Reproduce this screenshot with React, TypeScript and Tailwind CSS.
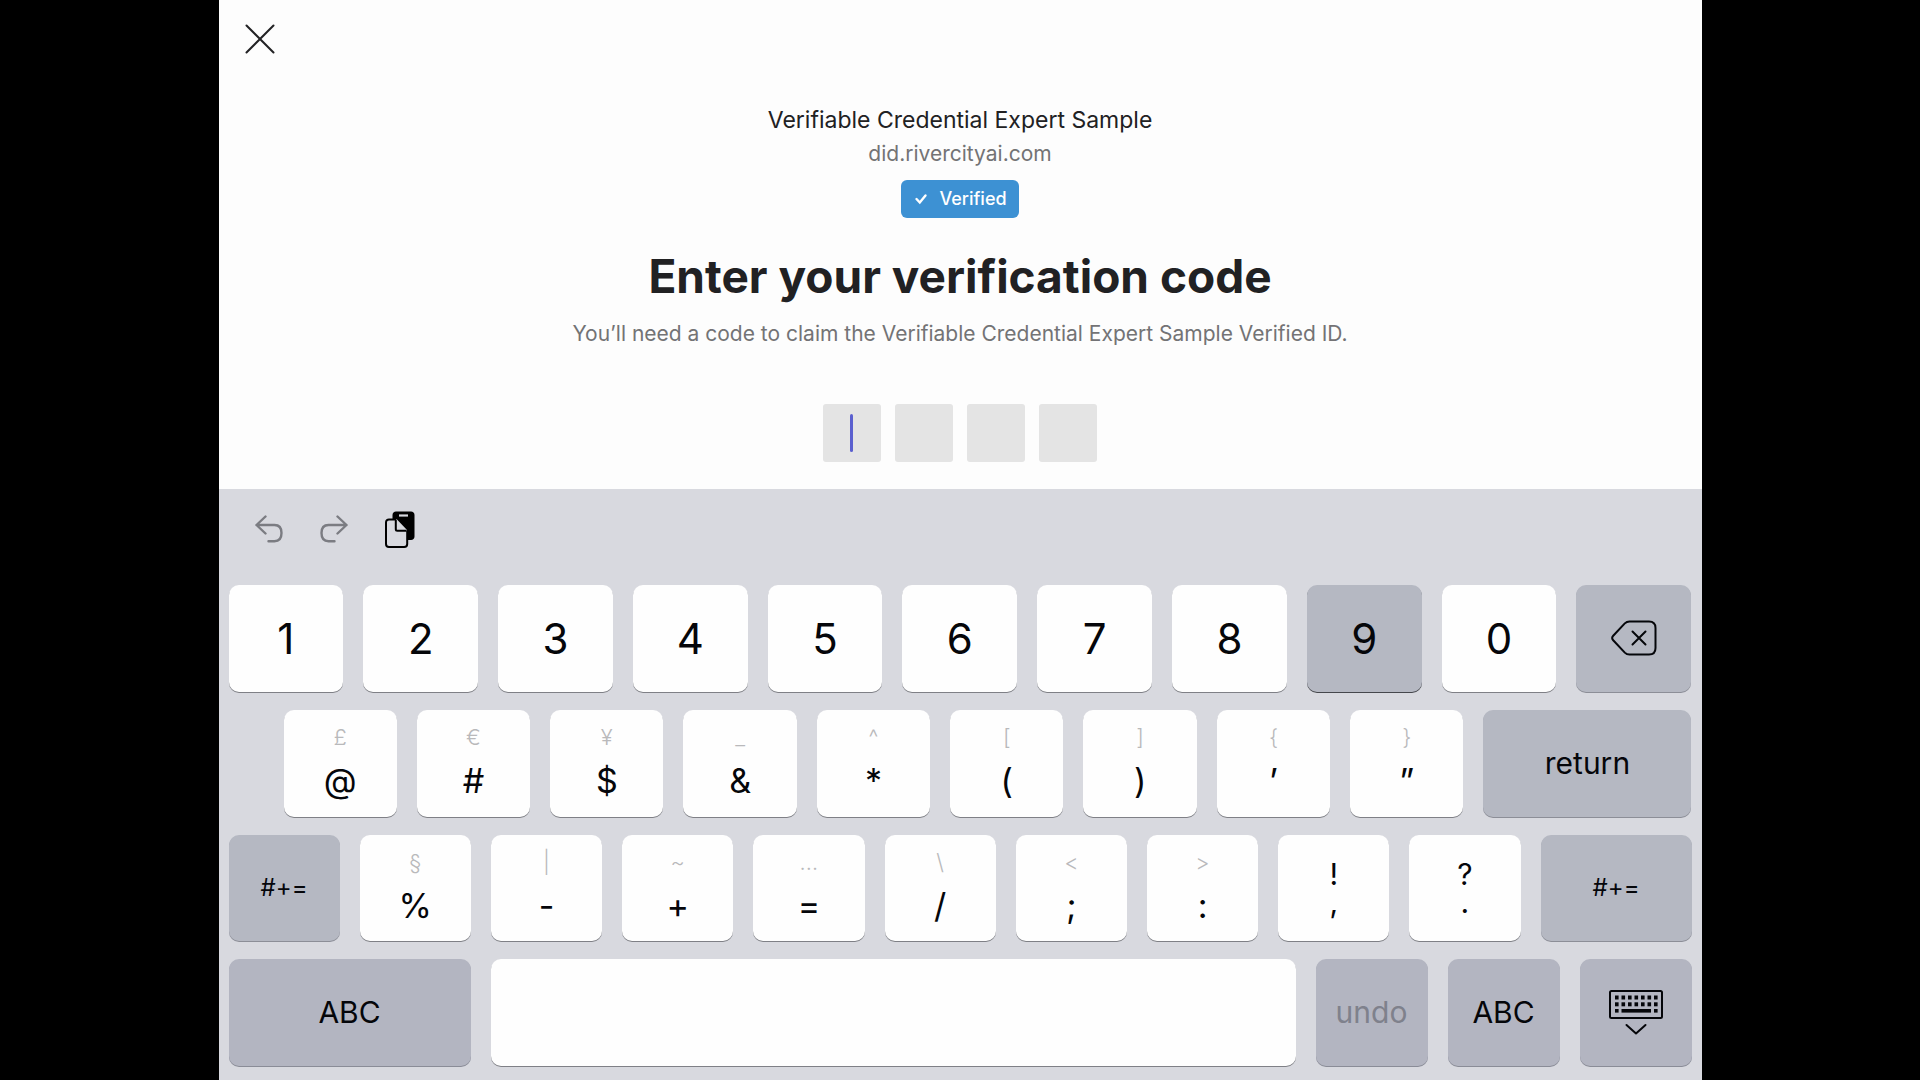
import type { ReactNode } from "react";

const WHITE = "bg-[#fefefe] shadow-[0_1px_0_#7f8086]";
const GREY = "bg-[#b5b8c2] shadow-[0_1px_0_#8c8e97]";
const DIM = "bg-[#b3b5c1] shadow-[0_1px_0_#8a8c97]";
const PRESSED = "bg-[#b5b8c2] shadow-[0_1px_0_#45474c]";

function Key({
  tone = WHITE,
  size = "min-w-0 flex-1",
  label,
  children,
}: {
  tone?: string;
  size?: string;
  label?: string;
  children?: ReactNode;
}) {
  return (
    <button
      type="button"
      aria-label={label}
      className={`mb-px flex flex-col items-center justify-center rounded-[10px] ${size} ${tone}`}
    >
      {children}
    </button>
  );
}

function DualKey({ alt, main }: { alt: string; main: string }) {
  return (
    <Key>
      <span className="text-[22px] leading-10 font-light text-[#b9b9bb]">{alt}</span>
      <span className="pb-1 text-[34px] leading-12">{main}</span>
    </Key>
  );
}

function PunctuationKey({ top, bottom }: { top: string; bottom: string }) {
  return (
    <Key>
      <span className="text-[30px] leading-7">{top}</span>
      <span className="text-[30px] leading-7">{bottom}</span>
    </Key>
  );
}

function CloseIcon() {
  return (
    <svg width="30" height="30" viewBox="0 0 30 30" fill="none" stroke="#222224" strokeWidth="2" strokeLinecap="round">
      <path d="M1.5 1.5 28.5 28.5M28.5 1.5 1.5 28.5" />
    </svg>
  );
}

function UndoIcon({ flipped = false }: { flipped?: boolean }) {
  return (
    <svg
      width="28"
      height="28"
      viewBox="0 0 28 28"
      fill="none"
      stroke="#7b7c82"
      strokeWidth="2.4"
      strokeLinecap="round"
      strokeLinejoin="round"
      className={flipped ? "-scale-x-100" : ""}
    >
      <path d="M10.5 1.5 1.5 10 10.5 18.5M1.5 10H19.5C24 10 26.5 13 26.5 18S24 26.2 19.5 26.2H13.5" />
    </svg>
  );
}

function PasteIcon() {
  return (
    <svg width="30" height="37" viewBox="0 0 30 37" fill="none">
      <path d="M11 .5H26C28 .5 29.5 2 29.5 4V25.5C29.5 27.500 28 29 26 29H22V19L12 8.500H7.500V4C7.500 2 9 .5 11 .5Z" fill="#000" />
      <path d="M14 4.500H23" stroke="#d8d9df" strokeWidth="2.200" />
      <path
        d="M11 8.500H4C2.200 8.500 1 9.700 1 11.500V33C1 34.700 2.200 36 4 36H19.200C21 36 22 34.700 22 33V20L11 9Z"
        fill="#d8d9df"
      />
      <path
        d="M11 8.500H4C2.200 8.500 1 9.700 1 11.500V33C1 34.700 2.200 36 4 36H19.200C21 36 22.200 34.700 22.200 33V19.500"
        stroke="#000"
        strokeWidth="2"
      />
      <path d="M10.800 9V18.200C10.800 19.200 11.300 19.700 12.300 19.700H21.500" stroke="#000" strokeWidth="2" />
    </svg>
  );
}

function DeleteIcon() {
  return (
    <svg
      width="46"
      height="36"
      viewBox="0 0 46 36"
      fill="none"
      stroke="#05060a"
      strokeWidth="2"
      strokeLinecap="round"
      strokeLinejoin="round"
    >
      <path d="M18.500 1.500H38C42.500 1.500 44.500 3.500 44.500 8V28C44.500 32.500 42.500 34.500 38 34.500H18.500C16.500 34.500 15 33.800 13.800 32.600L2.200 20.200C.8 18.700 .8 17.300 2.200 15.800L13.800 3.400C15 2.200 16.500 1.500 18.500 1.500Z" />
      <path d="M21.500 11.500 34.500 24.500M34.500 11.500 21.500 24.500" />
    </svg>
  );
}

function KeyboardIcon() {
  const columns = [6, 12.5, 19, 25.5, 32, 38.5, 45];
  return (
    <svg width="54" height="46" viewBox="0 0 54 46" fill="none">
      <rect x="1" y="1" width="52" height="27" rx="1.500" stroke="#05060a" strokeWidth="2" />
      {columns.map((x) => (
        <g key={x} fill="#05060a">
          <rect x={x} y="5.500" width="3.600" height="4" />
          <rect x={x} y="12.300" width="3.600" height="4" />
        </g>
      ))}
      <g fill="#05060a">
        <rect x="6" y="19" width="3.600" height="3.600" />
        <rect x="12.500" y="19" width="29.500" height="3.600" />
        <rect x="45" y="19" width="3.600" height="3.600" />
      </g>
      <path
        d="M17.500 35 27 43.500 36.500 35"
        stroke="#05060a"
        strokeWidth="2"
        strokeLinecap="round"
        strokeLinejoin="round"
      />
    </svg>
  );
}

const digits = ["1", "2", "3", "4", "5", "6", "7", "8", "9", "0"];
const rowTwo = [
  ["£", "@"],
  ["€", "#"],
  ["¥", "$"],
  ["_", "&"],
  ["^", "*"],
  ["[", "("],
  ["]", ")"],
  ["{", "’"],
  ["}", "”"],
];
const rowThree = [
  ["§", "%"],
  ["|", "-"],
  ["~", "+"],
  ["…", "="],
  ["\\", "/"],
  ["<", ";"],
  [">", ":"],
];

export default function App() {
  return (
    <div className="min-h-screen bg-black font-['Inter',sans-serif]">
      <div className="mx-auto flex min-h-screen w-full max-w-[1483px] flex-col bg-[#fdfdfd]">
        <header className="flex h-[104px] shrink-0 items-start pt-6 pl-[26px]">
          <button type="button" aria-label="Close">
            <CloseIcon />
          </button>
        </header>

        <main className="flex flex-col items-center pb-[27px]">
          <p className="text-[23px] leading-8 text-[#212123]">Verifiable Credential Expert Sample</p>
          <p className="text-[21px] leading-9 text-[#737375]">did.rivercityai.com</p>
          <span className="mt-2 flex h-[38px] items-center gap-2.5 rounded-md bg-[#3d91d3] px-3 text-lg font-medium text-white">
            <svg width="16" height="12" viewBox="0 0 16 12" fill="none" stroke="#fff" strokeWidth="2.4" strokeLinecap="round">
              <path d="M3.500 6 6.800 9.500 12.500 2.500" />
            </svg>
            Verified
          </span>
          <h1 className="mt-7 text-[46px] leading-15 font-bold text-[#212123]">Enter your verification code</h1>
          <p className="mt-3 text-[21px] leading-8 text-[#737375]">
            You’ll need a code to claim the Verifiable Credential Expert Sample Verified ID.
          </p>
          <div className="mt-[54px] flex gap-3.5">
            {[1, 2, 3, 4].map((n) => (
              <div key={n} className="relative">
                <input
                  aria-label={`Digit ${n}`}
                  maxLength={1}
                  inputMode="numeric"
                  className="block size-[58px] rounded-[3px] bg-[#e4e4e4] text-center text-3xl caret-[#5b5fc7] outline-none"
                />
                {n === 1 && <span className="absolute top-2.5 left-[27px] h-[38px] w-[3px] rounded-full bg-[#5b60cf]" />}
              </div>
            ))}
          </div>
        </main>

        <section aria-label="Keyboard" className="flex flex-1 flex-col bg-[#d8d9df] px-2.5 pb-[13px] text-[#05060a]">
          <div className="flex h-24 shrink-0 items-start gap-[37px] pt-[22px] pl-[26px]">
            <button type="button" aria-label="Undo" className="pt-1">
              <UndoIcon />
            </button>
            <button type="button" aria-label="Redo" className="pt-1">
              <UndoIcon flipped />
            </button>
            <button type="button" aria-label="Paste">
              <PasteIcon />
            </button>
          </div>

          <div className="grid flex-1 grid-rows-4 gap-[17px]">
            <div className="flex gap-5">
              {digits.map((d) => (
                <Key key={d} tone={d === "9" ? PRESSED : WHITE}>
                  <span className="text-[42px]">{d}</span>
                </Key>
              ))}
              <Key tone={GREY} size="w-[115px] shrink-0" label="Delete">
                <DeleteIcon />
              </Key>
            </div>

            <div className="flex gap-5 pl-[55px]">
              {rowTwo.map(([alt, main]) => (
                <DualKey key={main} alt={alt} main={main} />
              ))}
              <Key tone={GREY} size="w-52 shrink-0">
                <span className="text-[30px]">return</span>
              </Key>
            </div>

            <div className="flex gap-5">
              <Key tone={GREY}>
                <span className="text-2xl">#+=</span>
              </Key>
              {rowThree.map(([alt, main]) => (
                <DualKey key={main} alt={alt} main={main} />
              ))}
              <PunctuationKey top="!" bottom="," />
              <PunctuationKey top="?" bottom="." />
              <Key tone={GREY} size="w-[151px] shrink-0">
                <span className="text-2xl">#+=</span>
              </Key>
            </div>

            <div className="flex gap-5">
              <Key tone={DIM} size="w-[242px] shrink-0">
                <span className="text-[30px]">ABC</span>
              </Key>
              <Key label="Space" />
              <Key tone={DIM} size="w-[112px] shrink-0">
                <span className="text-[30px] text-[#7f818c]">undo</span>
              </Key>
              <Key tone={DIM} size="w-[112px] shrink-0">
                <span className="text-[30px]">ABC</span>
              </Key>
              <Key tone={DIM} size="w-[112px] shrink-0" label="Hide keyboard">
                <KeyboardIcon />
              </Key>
            </div>
          </div>
        </section>
      </div>
    </div>
  );
}
